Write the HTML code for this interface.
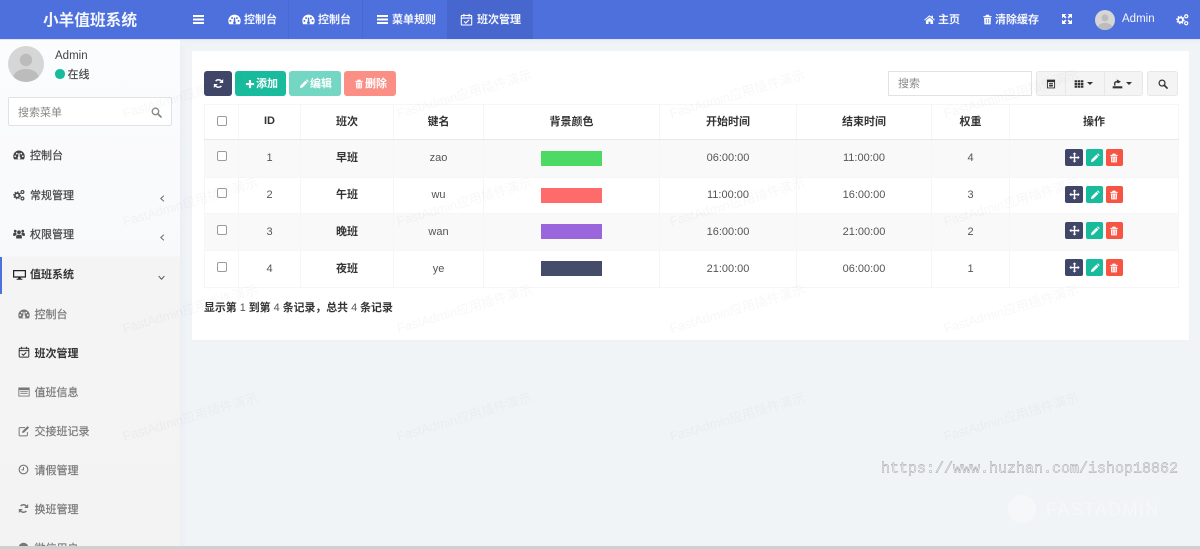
<!DOCTYPE html>
<html lang="zh-CN"><head><meta charset="utf-8"><title>小羊值班系统</title>
<style>
*{box-sizing:border-box}
html,body{margin:0;padding:0;width:1200px;height:549px;overflow:hidden}
body{position:relative;background:#f1f4f7;font:11px "Liberation Sans","Noto Sans CJK SC",sans-serif;color:#444}
.a{position:absolute}
.c{position:absolute;transform:translate(-50%,-50%);white-space:nowrap}
.l{position:absolute;transform:translateY(-50%);white-space:nowrap}
svg.i{position:absolute;fill:currentColor;overflow:visible}
#hd{left:0;top:0;width:1200px;height:40px;background:#4d70dc;border-bottom:1px solid #dfe6fa;color:#fff}
#hd .l{font-weight:700;color:#f4f6fd;margin-top:-.5px}
#sb{left:0;top:40px;width:180px;height:506px;background:linear-gradient(#fbfcfd,#f8f9fb 215px,#f4f4f5 218px,#f3f3f4);overflow:hidden}
#shade{left:180px;top:40px;width:8px;height:506px;background:linear-gradient(90deg,#ebeff3,#f1f4f7)}
#shade2{left:180px;top:40px;width:1020px;height:6px;background:linear-gradient(#ebeff3,#f1f4f7)}
#pn{left:192px;top:51px;width:997px;height:289px;background:#fff;box-shadow:0 1px 2px rgba(0,0,0,.02)}
.m{color:#444;-webkit-text-stroke:.18px #444}
.s{color:#777;-webkit-text-stroke:.18px #777}
.btn{position:absolute;top:71px;height:25px;border-radius:3px;color:#fff}
table{position:absolute;left:204px;top:104px;width:974px;border-collapse:collapse;table-layout:fixed;font-size:11px;color:#555}
td,th{border:1px solid #f6f6f6;text-align:center;padding:0;vertical-align:middle;position:relative}
th{font-weight:700;color:#333;height:35px;border-bottom:1px solid #e8e8e8;padding-bottom:2px}
tr.o td{background:#f9f9f9}
td b{color:#333;position:relative;top:-1px}
.cb{display:block;margin:-4px auto 0;width:10px;height:10px;border:1px solid #9b9b9b;border-radius:2px;background:#fff}
.bar{display:block;width:61px;height:15px;margin-left:57px}
.ab{position:absolute;width:18px;height:17px;border-radius:2px;color:#fff}
.wm{position:absolute;transform:translate(-50%,-50%) rotate(-16.5deg);white-space:nowrap;font-size:13px;color:rgba(40,50,70,.04);pointer-events:none}
</style></head><body>
<svg width="0" height="0" style="position:absolute">
<defs>
<symbol id="bars" viewBox="0 0 11 9"><path d="M0 0h11v2H0zM0 3.500h11v2H0zM0 7h11v2H0z"/></symbol>
<symbol id="dash" viewBox="0 0 16 16"><path fill-rule="evenodd" d="M8 2A7.6 7.6 0 0 0 .4 9.600c0 1.600.4 3 1.100 4.200h13c.7-1.200 1.100-2.600 1.100-4.200A7.600 7.600 0 0 0 8 2zM3 8.500a1.200 1.200 0 1 1 0 2.400 1.200 1.200 0 0 1 0-2.400zM5 5a1.200 1.200 0 1 1 0 2.400A1.200 1.200 0 0 1 5 5zM11 5a1.200 1.200 0 1 1 0 2.400A1.200 1.200 0 0 1 11 5zM13 8.500a1.200 1.200 0 1 1 0 2.400 1.200 1.200 0 0 1 0-2.400zM7.200 5.500h1.600l.2 5a1.800 1.800 0 1 1-2 0z"/></symbol>
<symbol id="cal" viewBox="0 0 16 16"><g fill="none" stroke="currentColor" stroke-width="1.300"><rect x="1.600" y="3" width="12.800" height="11.800" rx="1"/><path d="M1.600 6.200h12.800M4.800 1v3.400M11.200 1v3.400"/><path d="M5 10.300l2.200 2.100 3.800-3.900" stroke-width="1.400"/></g></symbol>
<symbol id="home" viewBox="0 0 16 16"><path d="M8 1.800L.3 8.400l1 1.100L8 3.900l6.700 5.600 1-1.100L13 6.100V2.600h-2.200v1.600zM2.800 9.600v5h3.800v-3.500h2.800v3.500h3.800v-5L8 5.300z"/></symbol>
<symbol id="trash" viewBox="0 0 16 16"><path fill-rule="evenodd" d="M5.800 1h4.400l.8 2h3v1.500H2V3h3zM3 5.500h10l-.5 9.500h-9zM5.600 7v6.500h1.100V7zM9.300 7v6.500h1.100V7z"/></symbol>
<symbol id="exp" viewBox="0 0 16 16"><path d="M0 0h7L0 7zM16 0v7L9 0zM0 16V9l7 7zM16 16H9l7-7z"/><path d="M3 3l3.200 3.200M13 3L9.800 6.200M3 13l3.200-3.200M13 13L9.800 9.800" stroke="currentColor" stroke-width="2.600"/></symbol>
<symbol id="cogs" viewBox="0 0 16 16"><g fill="none" stroke="currentColor"><circle cx="5.500" cy="8.500" r="3" stroke-width="2.200"/><circle cx="5.500" cy="8.500" r="4.600" stroke-width="1.400" stroke-dasharray="1.800 1.800"/><circle cx="12.600" cy="4" r="1.900" stroke-width="1.500"/><circle cx="12.600" cy="12.600" r="1.900" stroke-width="1.500"/></g></symbol>
<symbol id="ref" viewBox="0 0 16 16"><path fill="none" stroke="currentColor" stroke-width="2.200" d="M13.200 6.500A5.500 5.500 0 0 0 3.800 4.400M2.800 9.500a5.500 5.500 0 0 0 9.400 2.100"/><path d="M14.800 1.500v5.800H9zM1.200 14.500V8.700H7z"/></symbol>
<symbol id="plus" viewBox="0 0 16 16"><path d="M6.300 1.500h3.400v4.800h4.800v3.400H9.700v4.800H6.300V9.700H1.500V6.300h4.800z"/></symbol>
<symbol id="pen" viewBox="0 0 16 16"><path d="M1.500 14.500l.9-4 7.900-7.900 3.100 3.100-7.900 7.900zM11.200 1.800l.7-.7c.4-.4 1-.4 1.400 0l1.700 1.700c.4.400.4 1 0 1.400l-.7.700z"/></symbol>
<symbol id="sea" viewBox="0 0 16 16"><circle cx="6.500" cy="6.500" r="4.700" fill="none" stroke="currentColor" stroke-width="2"/><path d="M10 10l4.500 4.500" stroke="currentColor" stroke-width="2.600" stroke-linecap="round"/></symbol>
<symbol id="th" viewBox="0 0 16 16"><path d="M1 2h4v3.400H1zM6 2h4v3.400H6zM11 2h4v3.400h-4zM1 6.300h4v3.400H1zM6 6.300h4v3.400H6zM11 6.300h4v3.400h-4zM1 10.600h4V14H1zM6 10.600h4V14H6zM11 10.600h4V14h-4z"/></symbol>
<symbol id="exportx" viewBox="0 0 16 16"><path d="M1 12h14v3H1zM3 11V7.500C3 5.500 4.500 4.500 7 4.500V2l6 3.500-4 2.200-2-1.200c-2 0-2 .8-2 2V11z"/></symbol>
<symbol id="card" viewBox="0 0 16 16"><path fill-rule="evenodd" d="M1.500 1h13v14h-13zM3 5v8.600h10V5zM5 6.500h6v1.500H5zM5 9h6v3H5z"/></symbol>
<symbol id="move" viewBox="0 0 16 16"><path d="M8 .5l2.800 2.800H9v3.700h3.700V5.200L15.500 8l-2.800 2.800V9H9v3.700h1.800L8 15.500l-2.800-2.800H7V9H3.300v1.800L.5 8l2.800-2.800V7H7V3.300H5.200z"/></symbol>
<symbol id="mon" viewBox="0 0 16 16"><path fill-rule="evenodd" d="M0 2.500h16v9.300H9.600v1.400h2v1.300H4.400v-1.300h2v-1.400H0zM1.500 4v6.300h13V4z"/></symbol>
<symbol id="users" viewBox="0 0 16 16"><circle cx="8" cy="5.600" r="2.500"/><circle cx="3" cy="4.200" r="1.800"/><circle cx="13" cy="4.200" r="1.800"/><path d="M4.200 14v-2.800C4.200 9.500 5.500 8.800 8 8.800s3.800.7 3.800 2.400V14zM.2 10.500V8c0-1 .8-1.800 2.800-1.800.5 0 1 .1 1.300.2.100 1 .6 1.500 1 1.800-1.300.5-2.100 1.300-2.100 2.500zM15.800 10.500V8c0-1-.8-1.800-2.800-1.800-.5 0-1 .1-1.300.2-.1 1-.6 1.500-1 1.800 1.300.5 2.100 1.300 2.100 2.500z"/></symbol>
<symbol id="left" viewBox="0 0 16 16"><path d="M10.500 3L5 8l5.500 5" fill="none" stroke="currentColor" stroke-width="1.800"/></symbol>
<symbol id="down" viewBox="0 0 16 16"><path d="M3 5.500L8 11l5-5.500" fill="none" stroke="currentColor" stroke-width="1.800"/></symbol>
<symbol id="list" viewBox="0 0 16 16"><path fill-rule="evenodd" d="M.5 2h15v12H.5zM1.700 5.500v7.300h12.600V5.500zM3 7h10v1.100H3zM3 9.300h10v1.100H3z"/></symbol>
<symbol id="edit" viewBox="0 0 16 16"><path fill="none" stroke="currentColor" stroke-width="1.300" d="M12.500 9.500v4a1 1 0 0 1-1 1H2.500a1 1 0 0 1-1-1v-9a1 1 0 0 1 1-1h7"/><path d="M6 8.200L12.800 1.500l2 2L8 10.200l-2.400.4z"/></symbol>
<symbol id="clock" viewBox="0 0 16 16"><circle cx="8" cy="8" r="6.300" fill="none" stroke="currentColor" stroke-width="1.700"/><path d="M8 4.500v4H5" fill="none" stroke="currentColor" stroke-width="1.500"/></symbol>
<symbol id="globe" viewBox="0 0 16 16"><circle cx="8" cy="8" r="7"/></symbol>
<symbol id="ava" viewBox="0 0 36 36"><clipPath id="cp"><circle cx="18" cy="18" r="18"/></clipPath><g clip-path="url(#cp)"><rect width="36" height="36" fill="#d6d6d6"/><circle cx="18" cy="14" r="6.200" fill="#bcbcbc"/><ellipse cx="18" cy="31" rx="12.500" ry="8" fill="#bcbcbc"/></g></symbol>
</defs></svg>

<div class="a" id="shade"></div><div class="a" id="shade2"></div>

<div class="a" id="hd">
<div class="c" style="left:90px;top:18.500px;font-size:15.700px;font-weight:700;color:#f4f6fd">小羊值班系统</div>
<div class="a" style="left:288px;top:0;width:1px;height:39px;background:#4868d2"></div>
<div class="a" style="left:362px;top:0;width:1px;height:39px;background:#4868d2"></div>
<div class="a" style="left:447px;top:0;width:86px;height:39px;background:#4767cf"></div>
<svg class="i" style="left:193px;top:15px" width="11" height="9"><use href="#bars"/></svg>
<svg class="i" style="left:228px;top:13px" width="13" height="13"><use href="#dash"/></svg><div class="l" style="left:244px;top:19.500px">控制台</div>
<svg class="i" style="left:302px;top:13px" width="13" height="13"><use href="#dash"/></svg><div class="l" style="left:318px;top:19.500px">控制台</div>
<svg class="i" style="left:377px;top:15px" width="11" height="9"><use href="#bars"/></svg><div class="l" style="left:392px;top:19.500px">菜单规则</div>
<svg class="i" style="left:460px;top:13px" width="13" height="13"><use href="#cal"/></svg><div class="l" style="left:477px;top:19.500px">班次管理</div>
<svg class="i" style="left:924px;top:14px" width="11" height="11"><use href="#home"/></svg><div class="l" style="left:938px;top:19.500px">主页</div>
<svg class="i" style="left:982px;top:14px" width="11" height="11"><use href="#trash"/></svg><div class="l" style="left:995px;top:19.500px">清除缓存</div>
<svg class="i" style="left:1062px;top:14px" width="10" height="10"><use href="#exp"/></svg>
<svg class="i" style="left:1095px;top:10px;color:#d6d6d6" width="20" height="20"><use href="#ava"/></svg>
<div class="l" style="left:1122px;top:19.500px;font-weight:400;font-size:11.500px">Admin</div>
<svg class="i" style="left:1176px;top:13px" width="13" height="13"><use href="#cogs"/></svg>
</div>

<div class="a" id="sb">
<svg class="i" style="left:8px;top:6px" width="36" height="36"><use href="#ava"/></svg>
<div class="l" style="left:55px;top:15.500px;color:#444;font-size:11.500px">Admin</div>
<div class="a" style="left:55px;top:29px;width:9.500px;height:9.500px;border-radius:50%;background:#18bc9c"></div>
<div class="l m" style="left:67.500px;top:33.500px">在线</div>
<div class="a" style="left:8px;top:57px;width:164px;height:29px;background:#fff;border:1px solid #dfe3e8;border-radius:2px"></div>
<div class="l" style="left:18px;top:71.500px;color:#888">搜索菜单</div>
<svg class="i" style="left:151px;top:66.500px;color:#888" width="11" height="11"><use href="#sea"/></svg>

<svg class="i" style="left:13px;top:109px" width="12" height="12"><use href="#dash"/></svg><div class="l m" style="left:30px;top:115px">控制台</div>
<svg class="i" style="left:13px;top:149px" width="12" height="12"><use href="#cogs"/></svg><div class="l m" style="left:30px;top:155px">常规管理</div>
<svg class="i" style="left:157.500px;top:154px;color:#666" width="9" height="9"><use href="#left"/></svg>
<svg class="i" style="left:13px;top:188px" width="12" height="12"><use href="#users"/></svg><div class="l m" style="left:30px;top:194px">权限管理</div>
<svg class="i" style="left:157.500px;top:193px;color:#666" width="9" height="9"><use href="#left"/></svg>
<div class="a" style="left:0;top:217px;width:2px;height:37px;background:#4d70dc"></div>
<svg class="i" style="left:13px;top:228px;color:#222" width="13" height="13"><use href="#mon"/></svg><div class="l" style="left:30px;top:234px;font-weight:700;color:#333">值班系统</div>
<svg class="i" style="left:157px;top:233px;color:#555" width="9" height="9"><use href="#down"/></svg>

<svg class="i" style="left:18px;top:268px;color:#777" width="12" height="12"><use href="#dash"/></svg><div class="l s" style="left:34.500px;top:273.500px">控制台</div>
<svg class="i" style="left:17.500px;top:306px;color:#333" width="12" height="12"><use href="#cal"/></svg><div class="l" style="left:34.500px;top:312.500px;font-weight:700;color:#333">班次管理</div>
<svg class="i" style="left:18px;top:346px;color:#777" width="12" height="12"><use href="#list"/></svg><div class="l s" style="left:34.500px;top:351.500px">值班信息</div>
<svg class="i" style="left:18px;top:385px;color:#777" width="12" height="12"><use href="#edit"/></svg><div class="l s" style="left:34.500px;top:390.500px">交接班记录</div>
<svg class="i" style="left:18px;top:424px;color:#777" width="11" height="11"><use href="#clock"/></svg><div class="l s" style="left:34.500px;top:429.500px">请假管理</div>
<svg class="i" style="left:18px;top:463px;color:#777" width="11" height="11"><use href="#ref"/></svg><div class="l s" style="left:34.500px;top:468.500px">换班管理</div>
<svg class="i" style="left:18px;top:502px;color:#777" width="11" height="11"><use href="#globe"/></svg><div class="l s" style="left:34.500px;top:507.500px">微信用户</div>
</div>

<div class="a" id="pn"></div>

<div class="btn" style="left:204px;width:28px;background:#3f4667"><svg class="i" style="left:8.500px;top:7px" width="11" height="11"><use href="#ref"/></svg></div>
<div class="btn" style="left:235px;width:51px;background:#18bc9c;font-weight:700"><svg class="i" style="left:9.500px;top:7.500px" width="10" height="10"><use href="#plus"/></svg><div class="l" style="left:21px;top:12px">添加</div></div>
<div class="btn" style="left:289px;width:52px;background:#74d7c4;font-weight:700"><svg class="i" style="left:9.500px;top:7.500px" width="10" height="10"><use href="#pen"/></svg><div class="l" style="left:21px;top:12px">编辑</div></div>
<div class="btn" style="left:344px;width:52px;background:#fb8f85;font-weight:700"><svg class="i" style="left:9.500px;top:7.500px" width="10" height="10"><use href="#trash"/></svg><div class="l" style="left:21px;top:12px">删除</div></div>

<div class="a" style="left:888px;top:71px;width:144px;height:25px;background:#fff;border:1px solid #dfe3e8"></div>
<div class="l" style="left:898px;top:83px;color:#888">搜索</div>
<div class="btn" style="left:1036px;width:107px;background:#f4f4f4;border:1px solid #e7e7e7;color:#333">
<div class="a" style="left:28px;top:0;width:1px;height:23px;background:#e7e7e7"></div>
<div class="a" style="left:67px;top:0;width:1px;height:23px;background:#e7e7e7"></div>
<svg class="i" style="left:9px;top:6.500px" width="10" height="10"><use href="#card"/></svg>
<svg class="i" style="left:37px;top:6.500px" width="10" height="10"><use href="#th"/></svg>
<div class="a" style="left:50px;top:10px;border:3.500px solid transparent;border-top:3.500px solid #333;border-bottom:0"></div>
<svg class="i" style="left:75px;top:6px" width="11" height="11"><use href="#exportx"/></svg>
<div class="a" style="left:89px;top:10px;border:3.500px solid transparent;border-top:3.500px solid #333;border-bottom:0"></div>
</div>
<div class="btn" style="left:1147px;width:31px;background:#f4f4f4;border:1px solid #e7e7e7;color:#333"><svg class="i" style="left:9.500px;top:6.500px" width="10" height="10"><use href="#sea"/></svg></div>

<table>
<colgroup><col style="width:34px"><col style="width:62px"><col style="width:93px"><col style="width:90px"><col style="width:176px"><col style="width:137px"><col style="width:135px"><col style="width:78px"><col style="width:169px"></colgroup>
<tr><th><span class="cb" style="margin-top:-1px"></span></th><th>ID</th><th>班次</th><th>键名</th><th>背景颜色</th><th>开始时间</th><th>结束时间</th><th>权重</th><th>操作</th></tr>
<tr class="o" style="height:37.500px"><td><span class="cb"></span></td><td>1</td><td><b>早班</b></td><td>zao</td><td><span class="bar" style="background:#4cd964"></span></td><td>06:00:00</td><td>11:00:00</td><td>4</td><td></td></tr>
<tr style="height:36px"><td><span class="cb"></span></td><td>2</td><td><b>午班</b></td><td>wu</td><td><span class="bar" style="background:#ff6b6b"></span></td><td>11:00:00</td><td>16:00:00</td><td>3</td><td></td></tr>
<tr class="o" style="height:37px"><td><span class="cb"></span></td><td>3</td><td><b>晚班</b></td><td>wan</td><td><span class="bar" style="background:#9b66dc"></span></td><td>16:00:00</td><td>21:00:00</td><td>2</td><td></td></tr>
<tr style="height:37px"><td><span class="cb"></span></td><td>4</td><td><b>夜班</b></td><td>ye</td><td><span class="bar" style="background:#444c69"></span></td><td>21:00:00</td><td>06:00:00</td><td>1</td><td></td></tr>
</table>

<div class="ab" style="left:1065px;top:149px;background:#3f4667"><svg class="i" style="left:3.500px;top:3px" width="11" height="11"><use href="#move"/></svg></div>
<div class="ab" style="left:1086px;top:149px;width:17px;background:#18bc9c"><svg class="i" style="left:3.500px;top:3.500px" width="10" height="10"><use href="#pen"/></svg></div>
<div class="ab" style="left:1105.500px;top:149px;width:17px;background:#f75444"><svg class="i" style="left:3.500px;top:3.500px" width="10" height="10"><use href="#trash"/></svg></div>
<div class="ab" style="left:1065px;top:186px;background:#3f4667"><svg class="i" style="left:3.500px;top:3px" width="11" height="11"><use href="#move"/></svg></div>
<div class="ab" style="left:1086px;top:186px;width:17px;background:#18bc9c"><svg class="i" style="left:3.500px;top:3.500px" width="10" height="10"><use href="#pen"/></svg></div>
<div class="ab" style="left:1105.500px;top:186px;width:17px;background:#f75444"><svg class="i" style="left:3.500px;top:3.500px" width="10" height="10"><use href="#trash"/></svg></div>
<div class="ab" style="left:1065px;top:222px;background:#3f4667"><svg class="i" style="left:3.500px;top:3px" width="11" height="11"><use href="#move"/></svg></div>
<div class="ab" style="left:1086px;top:222px;width:17px;background:#18bc9c"><svg class="i" style="left:3.500px;top:3.500px" width="10" height="10"><use href="#pen"/></svg></div>
<div class="ab" style="left:1105.500px;top:222px;width:17px;background:#f75444"><svg class="i" style="left:3.500px;top:3.500px" width="10" height="10"><use href="#trash"/></svg></div>
<div class="ab" style="left:1065px;top:259px;background:#3f4667"><svg class="i" style="left:3.500px;top:3px" width="11" height="11"><use href="#move"/></svg></div>
<div class="ab" style="left:1086px;top:259px;width:17px;background:#18bc9c"><svg class="i" style="left:3.500px;top:3.500px" width="10" height="10"><use href="#pen"/></svg></div>
<div class="ab" style="left:1105.500px;top:259px;width:17px;background:#f75444"><svg class="i" style="left:3.500px;top:3.500px" width="10" height="10"><use href="#trash"/></svg></div>

<div class="l" style="left:204px;top:306.500px;font-size:10.900px;font-weight:700;color:#333">显示第 <span style="font-weight:400;color:#555">1</span> 到第 <span style="font-weight:400;color:#555">4</span> 条记录，总共 <span style="font-weight:400;color:#555">4</span> 条记录</div>

<div class="wm" style="left:190px;top:93px">FastAdmin应用插件演示</div><div class="wm" style="left:464px;top:93px">FastAdmin应用插件演示</div><div class="wm" style="left:737px;top:93px">FastAdmin应用插件演示</div><div class="wm" style="left:1011px;top:93px">FastAdmin应用插件演示</div>
<div class="wm" style="left:190px;top:201px">FastAdmin应用插件演示</div><div class="wm" style="left:464px;top:201px">FastAdmin应用插件演示</div><div class="wm" style="left:737px;top:201px">FastAdmin应用插件演示</div><div class="wm" style="left:1011px;top:201px">FastAdmin应用插件演示</div>
<div class="wm" style="left:190px;top:308px">FastAdmin应用插件演示</div><div class="wm" style="left:464px;top:308px">FastAdmin应用插件演示</div><div class="wm" style="left:737px;top:308px">FastAdmin应用插件演示</div><div class="wm" style="left:1011px;top:308px">FastAdmin应用插件演示</div>
<div class="wm" style="left:190px;top:416px">FastAdmin应用插件演示</div><div class="wm" style="left:464px;top:416px">FastAdmin应用插件演示</div><div class="wm" style="left:737px;top:416px">FastAdmin应用插件演示</div><div class="wm" style="left:1011px;top:416px">FastAdmin应用插件演示</div>

<div class="l" style="left:881px;top:469px;font:15px 'Liberation Mono',monospace;color:#f1f4f7;-webkit-text-stroke:.4px #999">https://www.huzhan.com/ishop18862</div>
<div class="a" style="left:1008px;top:495px;width:28px;height:28px;border-radius:50%;background:#f5f7f9"></div>
<div class="l" style="left:1046px;top:510px;font-size:18px;letter-spacing:1.300px;color:#f5f7f9">FASTADMIN</div>
<div class="a" style="left:0;top:546px;width:1200px;height:3px;background:#cfd0d0"></div>
</body></html>
